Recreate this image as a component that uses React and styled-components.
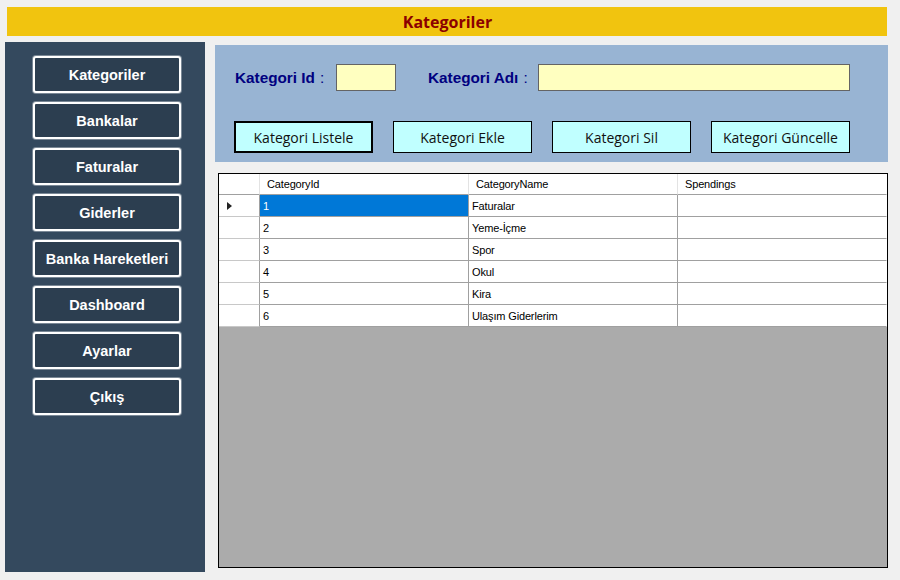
import React from "react"
import styled, { createGlobalStyle } from "styled-components"

const GlobalStyle = createGlobalStyle`
  * { box-sizing: border-box; }
  body {
    margin: 0;
    background: #f0f0f0;
    font-family: "Liberation Sans", Arial, sans-serif;
  }
`

const StyledPage = styled.div`
  width: 900px;
  height: 580px;
  padding: 7px 0 0 5px;
  background: #f0f0f0;
  overflow: hidden;
`

const StyledTitleBar = styled.header`
  margin-left: 2px;
  width: 880px;
  height: 29px;
  background: #f1c40f;
  display: flex;
  align-items: center;
  justify-content: center;
`

const StyledTitle = styled.h1`
  margin: 0;
  font-family: "Open Sans", "Noto Sans", sans-serif;
  font-size: 16px;
  font-weight: 700;
  color: #8b0000;
  padding-left: 1px;
`

const StyledBody = styled.div`
  display: flex;
  margin-top: 6px;
`

// SIDEBAR
const StyledSidebar = styled.nav`
  width: 200px;
  height: 530px;
  background: #34495e;
  padding: 14px 0 0 28px;
  display: flex;
  flex-direction: column;
  gap: 9px;
`

const StyledNavButton = styled.button`
  width: 148px;
  height: 37px;
  background: #2c3e50;
  border: 2px solid #ffffff;
  border-radius: 3px;
  box-shadow: 0 0 0 1px rgba(255, 255, 255, 0.35);
  color: #ffffff;
  font-family: "Liberation Sans", Arial, sans-serif;
  font-weight: 700;
  font-size: 14.5px;
  padding: 0;
  cursor: pointer;
`

// MAIN
const StyledMain = styled.main`
  margin-left: 10px;
  display: flex;
  flex-direction: column;
`

const StyledPanel = styled.section`
  margin-top: 3px;
  width: 673px;
  height: 117px;
  background: #98b4d3;
  padding: 19px 0 0 19px;
`

const StyledFieldRow = styled.div`
  display: flex;
  align-items: center;
  height: 27px;
`

const StyledLabel = styled.label`
  width: ${props => props.$width}px;
  margin-left: ${props => props.$offset || 0}px;
  padding-left: 1px;
  font-family: "Liberation Sans", Arial, sans-serif;
  font-weight: 700;
  font-size: 15.3px;
  color: #000080;
  white-space: nowrap;
`

const StyledColon = styled.span`
  font-weight: 400;
  margin-left: 5px;
`

const StyledInput = styled.div`
  width: ${props => props.$width}px;
  height: 27px;
  background: #ffffc0;
  border: 1px solid #646464;
`

const StyledActionRow = styled.div`
  display: flex;
  gap: 20px;
  margin-top: 30px;
`

const StyledActionButton = styled.button`
  width: 139px;
  height: 32px;
  background: #c0ffff;
  border: ${props => (props.$focused ? "2px solid #000" : "1px solid #000")};
  font-family: "Open Sans", "Noto Sans", sans-serif;
  font-size: 14px;
  color: #111;
  padding: 0;
  cursor: pointer;
`

// DATA GRID
const StyledGrid = styled.div`
  margin: 11px 0 0 3px;
  width: 670px;
  height: 395px;
  background: #ababab;
  border: 1px solid #000;
  font-family: "Liberation Sans", Arial, sans-serif;
  font-size: 11px;
  letter-spacing: -0.15px;
`

const StyledTable = styled.div`
  display: grid;
  grid-template-columns: 41px 209px 209px 209px;
  grid-template-rows: 21px;
  grid-auto-rows: 22px;
  background: #fff;
`

const StyledHeaderCell = styled.div`
  display: flex;
  align-items: center;
  padding-left: 7px;
  background: #fff;
  color: #000;
  border-right: 1px solid ${props => (props.$last ? "transparent" : "#e3e3e3")};
  border-bottom: 1px solid #a0a0a0;
`

const StyledRowHeader = styled.div`
  display: flex;
  align-items: center;
  padding-left: 8px;
  background: #fff;
  border-right: 1px solid #a0a0a0;
  border-bottom: 1px solid #c8c8c8;
`

const StyledCell = styled.div`
  display: flex;
  align-items: center;
  padding-left: 3px;
  background: ${props => (props.$selected ? "#0078d7" : "#fff")};
  color: ${props => (props.$selected ? "#fff" : "#000")};
  border-right: 1px solid ${props => (props.$last ? "transparent" : "#a0a0a0")};
  border-bottom: 1px solid #a0a0a0;
  white-space: nowrap;
`

const StyledArrow = styled.span`
  width: 0;
  height: 0;
  border-top: 4.5px solid transparent;
  border-bottom: 4.5px solid transparent;
  border-left: 5px solid #222;
`

const navItems = [
  "Kategoriler",
  "Bankalar",
  "Faturalar",
  "Giderler",
  "Banka Hareketleri",
  "Dashboard",
  "Ayarlar",
  "Çıkış",
]

const actions = ["Kategori Listele", "Kategori Ekle", "Kategori Sil", "Kategori Güncelle"]

const rows = [
  { id: 1, name: "Faturalar" },
  { id: 2, name: "Yeme-İçme" },
  { id: 3, name: "Spor" },
  { id: 4, name: "Okul" },
  { id: 5, name: "Kira" },
  { id: 6, name: "Ulaşım Giderlerim" },
]

export default function App() {
  return (
    <>
      <GlobalStyle />
      <StyledPage>
        <StyledTitleBar>
          <StyledTitle>Kategoriler</StyledTitle>
        </StyledTitleBar>
        <StyledBody>
          <StyledSidebar>
            {navItems.map(item => (
              <StyledNavButton key={item}>{item}</StyledNavButton>
            ))}
          </StyledSidebar>
          <StyledMain>
            <StyledPanel>
              <StyledFieldRow>
                <StyledLabel $width={102}>
                  Kategori Id<StyledColon>:</StyledColon>
                </StyledLabel>
                <StyledInput $width={60} />
                <StyledLabel $width={111} $offset={31}>
                  Kategori Adı<StyledColon>:</StyledColon>
                </StyledLabel>
                <StyledInput $width={312} />
              </StyledFieldRow>
              <StyledActionRow>
                {actions.map((a, i) => (
                  <StyledActionButton key={a} $focused={i === 0}>
                    {a}
                  </StyledActionButton>
                ))}
              </StyledActionRow>
            </StyledPanel>
            <StyledGrid>
              <StyledTable>
                <StyledHeaderCell />
                <StyledHeaderCell>CategoryId</StyledHeaderCell>
                <StyledHeaderCell>CategoryName</StyledHeaderCell>
                <StyledHeaderCell $last>Spendings</StyledHeaderCell>
                {rows.map((r, i) => (
                  <React.Fragment key={r.id}>
                    <StyledRowHeader>{i === 0 && <StyledArrow />}</StyledRowHeader>
                    <StyledCell $selected={i === 0}>{r.id}</StyledCell>
                    <StyledCell>{r.name}</StyledCell>
                    <StyledCell $last />
                  </React.Fragment>
                ))}
              </StyledTable>
            </StyledGrid>
          </StyledMain>
        </StyledBody>
      </StyledPage>
    </>
  )
}
